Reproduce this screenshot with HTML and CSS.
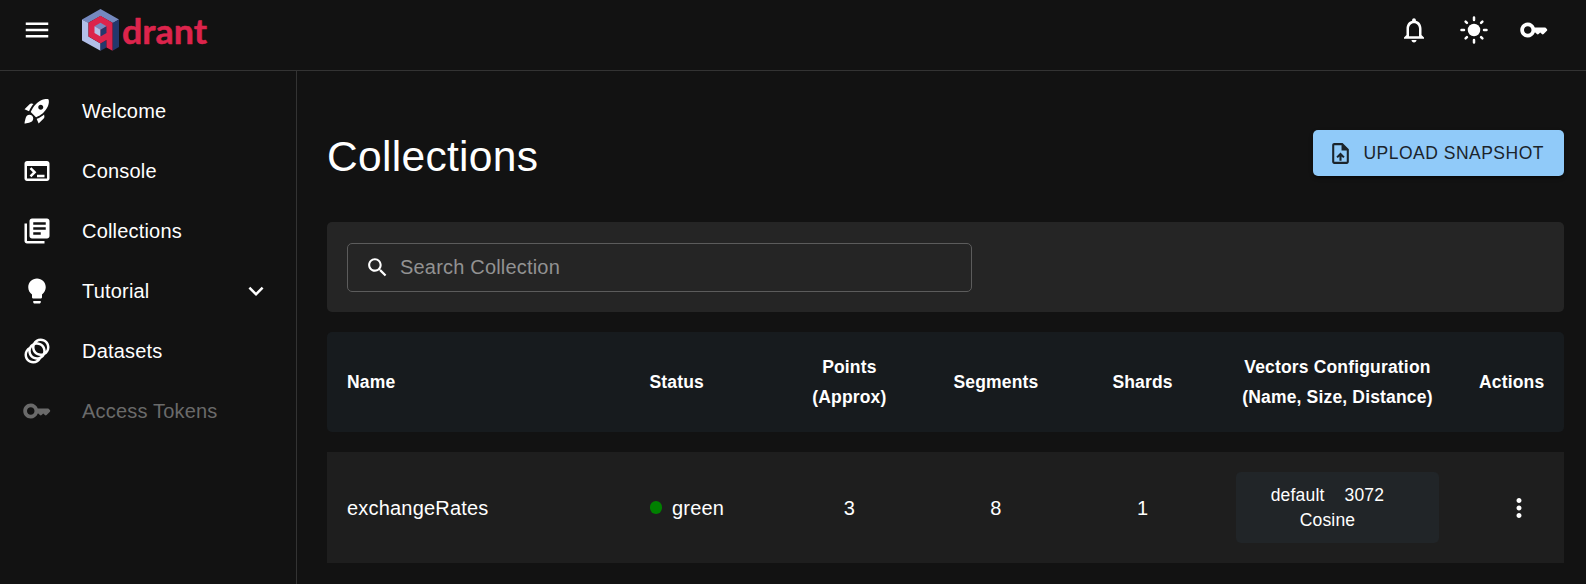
FILE: index.html
```html
<!DOCTYPE html>
<html lang="en">
<head>
<meta charset="utf-8">
<title>Qdrant Collections</title>
<link rel="stylesheet" href="styles.css">
</head>
<body>
<header class="topbar">
  <svg class="icon" viewBox="0 0 24 24"><path d="M3 18h18v-2H3zm0-5h18v-2H3zm0-7v2h18V6z"/></svg>
  <svg class="logo" viewBox="0 0 126 44">
    <path fill="#7589bf" d="M18.500 0 37 10.500 31 14 18.500 7 6 14 0 10.500z"/>
    <path fill="#b2bfe8" d="M0 10.500 6.500 14V27.500L18.500 34.500V41.700L0 31.500z"/>
    <path fill="#24386c" d="M37 10.500V38L30.500 41.700V14z"/>
    <path fill="#24386c" d="M18.500 34.500 24.500 31V38.500L18.500 41.700z"/>
    <path fill="#dc244c" d="M18.500 6.800 30.500 13.700V41.700L24.500 38.500V31L18.500 34.500 6.500 27.500V13.700z"/>
    <path fill="#7589bf" d="M18.500 13.700 24.500 17.200 18.500 20.700 12.500 17.200z"/>
    <path fill="#b2bfe8" d="M12.500 17.200 18.500 20.700V27.500L12.500 24z"/>
    <path fill="#24386c" d="M24.500 17.200V24L18.500 27.500V20.700z"/>
    <text class="logo-text" x="40" y="34.700" textLength="85" lengthAdjust="spacingAndGlyphs">drant</text>
  </svg>
  <div class="tools">
    <svg class="icon" viewBox="0 0 24 24"><path d="M12 22c1.100 0 2-.9 2-2h-4c0 1.100.9 2 2 2m6-6v-5c0-3.070-1.630-5.640-4.500-6.320V4c0-.83-.67-1.500-1.500-1.500s-1.500.67-1.500 1.500v.68C7.640 5.360 6 7.920 6 11v5l-2 2v1h16v-1zm-2 1H8v-6c0-2.480 1.510-4.500 4-4.500s4 2.020 4 4.500z"/></svg>
    <svg class="icon" viewBox="0 0 24 24"><circle cx="12" cy="12" r="5"/><path class="rays" d="M2 12h2M20 12h2M12 2v2M12 20v2M5.280 5.280l1.060 1.060M17.660 17.660l1.060 1.060M18.720 5.280l-1.060 1.060M6.340 17.660l-1.060 1.060"/></svg>
    <svg class="icon" viewBox="0 0 24 24"><path d="M20.590 10h-7.940C11.830 7.670 9.610 6 7 6c-3.310 0-6 2.690-6 6s2.690 6 6 6c2.610 0 4.830-1.670 5.650-4H13l1.290 1.290c.39.39 1.020.39 1.410 0L17 14l1.290 1.290c.39.39 1.030.39 1.420 0l2.590-2.610c.39-.39.39-1.030-.01-1.420l-.99-.97c-.2-.19-.45-.29-.71-.29M7 15c-1.650 0-3-1.350-3-3s1.350-3 3-3 3 1.350 3 3-1.350 3-3 3"/></svg>
  </div>
</header>
<div class="layout">
  <nav class="sidebar">
    <a class="nav-item"><svg class="icon" viewBox="0 0 24 24"><path d="M9.190 6.350c-2.040 2.290-3.440 5.580-3.570 5.890L2 10.690l4.050-4.050c.47-.47 1.150-.68 1.810-.55zM11.170 17s3.740-1.550 5.890-3.700c5.400-5.400 4.500-9.620 4.210-10.570-.95-.3-5.170-1.190-10.570 4.210C8.550 9.090 7 12.830 7 12.830zm6.480-2.190c-2.290 2.040-5.580 3.440-5.890 3.570L13.310 22l4.050-4.050c.47-.47.68-1.150.55-1.810zM9 18c0 .83-.34 1.580-.88 2.120C6.940 21.300 2 22 2 22s.7-4.940 1.880-6.120C4.420 15.340 5.170 15 6 15c1.660 0 3 1.340 3 3m4-9c0-1.100.9-2 2-2s2 .9 2 2-.9 2-2 2-2-.9-2-2"/></svg><span>Welcome</span></a>
    <a class="nav-item"><svg class="icon" viewBox="0 0 24 24"><path d="M20 4H4c-1.110 0-2 .9-2 2v12c0 1.100.89 2 2 2h16c1.100 0 2-.9 2-2V6c0-1.100-.89-2-2-2m0 14H4V8h16zm-2-1h-6v-2h6zM7.500 17l-1.410-1.410L8.670 13l-2.590-2.590L7.500 9l4 4z"/></svg><span>Console</span></a>
    <a class="nav-item"><svg class="icon" viewBox="0 0 24 24"><path d="M4 6H2v14c0 1.100.9 2 2 2h14v-2H4zm16-4H8c-1.100 0-2 .9-2 2v12c0 1.100.9 2 2 2h12c1.100 0 2-.9 2-2V4c0-1.100-.9-2-2-2m-1 9H9V9h10zm-4 4H9v-2h6zm4-8H9V5h10z"/></svg><span>Collections</span></a>
    <a class="nav-item"><svg class="icon" viewBox="0 0 24 24"><path d="M9 21c0 .5.4 1 1 1h4c.6 0 1-.5 1-1v-1H9zm3-19C8.100 2 5 5.100 5 9c0 2.400 1.200 4.500 3 5.700V17c0 .5.4 1 1 1h6c.6 0 1-.5 1-1v-2.300c1.800-1.300 3-3.400 3-5.700 0-3.900-3.100-7-7-7"/></svg><span>Tutorial</span><svg class="icon chevron" viewBox="0 0 24 24"><path d="M16.590 8.590 12 13.170 7.410 8.590 6 10l6 6 6-6z"/></svg></a>
    <a class="nav-item"><svg class="icon" viewBox="0 0 24 24"><path d="M15 2c-2.710 0-5.050 1.540-6.220 3.780-1.280.67-2.340 1.720-3 3C3.540 9.950 2 12.290 2 15c0 3.870 3.130 7 7 7 2.710 0 5.050-1.540 6.220-3.780 1.280-.67 2.340-1.720 3-3C20.460 14.050 22 11.710 22 9c0-3.870-3.130-7-7-7M9 20c-2.760 0-5-2.240-5-5 0-1.120.37-2.160 1-3 0 3.870 3.130 7 7 7-.84.63-1.880 1-3 1m3-3c-2.760 0-5-2.240-5-5 0-1.120.37-2.160 1-3 0 3.860 3.130 6.990 7 7-.84.63-1.880 1-3 1m4.700-3.300c-.53.19-1.100.3-1.700.3-2.760 0-5-2.240-5-5 0-.6.11-1.170.3-1.700.53-.19 1.100-.3 1.700-.3 2.760 0 5 2.240 5 5 0 .6-.11 1.170-.3 1.700M19 12c0-3.860-3.130-6.990-7-7 .84-.63 1.870-1 3-1 2.760 0 5 2.240 5 5 0 1.120-.37 2.160-1 3"/></svg><span>Datasets</span></a>
    <a class="nav-item disabled"><svg class="icon" viewBox="0 0 24 24"><path d="M20.590 10h-7.940C11.830 7.670 9.610 6 7 6c-3.310 0-6 2.690-6 6s2.690 6 6 6c2.610 0 4.830-1.670 5.650-4H13l1.290 1.290c.39.39 1.020.39 1.410 0L17 14l1.290 1.290c.39.39 1.030.39 1.420 0l2.590-2.610c.39-.39.39-1.030-.01-1.420l-.99-.97c-.2-.19-.45-.29-.71-.29M7 15c-1.650 0-3-1.350-3-3s1.350-3 3-3 3 1.350 3 3-1.350 3-3 3"/></svg><span>Access Tokens</span></a>
  </nav>
  <main class="content">
    <div class="heading">
      <h1 class="title">Collections</h1>
      <button class="upload"><svg class="icon-small" viewBox="0 0 24 24"><path d="M14 2H6c-1.100 0-1.990.9-1.990 2L4 20c0 1.100.89 2 1.990 2H18c1.100 0 2-.9 2-2V8zm4 18H6V4h7v5h5zM8 15.010l1.410 1.410L11 14.840V19h2v-4.160l1.590 1.590L16 15.010 12.010 11z"/></svg>UPLOAD SNAPSHOT</button>
    </div>
    <section class="search-card">
      <label class="search"><svg class="icon-small" viewBox="0 0 24 24"><path d="M15.500 14h-.79l-.28-.27C15.410 12.590 16 11.110 16 9.500 16 5.910 13.090 3 9.500 3S3 5.910 3 9.500 5.910 16 9.500 16c1.610 0 3.090-.59 4.230-1.570l.27.28v.79l5 4.990L20.490 19zm-6 0C7.010 14 5 11.990 5 9.500S7.010 5 9.500 5 14 7.010 14 9.500 11.990 14 9.500 14"/></svg><input class="search-input" type="text" placeholder="Search Collection"></label>
    </section>
    <div class="row head">
      <div>Name</div>
      <div>Status</div>
      <div class="center">Points<br>(Approx)</div>
      <div class="center">Segments</div>
      <div class="center">Shards</div>
      <div class="center">Vectors Configuration<br>(Name, Size, Distance)</div>
      <div class="right">Actions</div>
    </div>
    <div class="row item">
      <div>exchangeRates</div>
      <div class="status"><i class="dot"></i>green</div>
      <div class="center">3</div>
      <div class="center">8</div>
      <div class="center">1</div>
      <div class="config"><span>default</span><span>3072</span><span>Cosine</span></div>
      <div class="actions"><svg class="icon" viewBox="0 0 24 24"><path d="M12 8c1.100 0 2-.9 2-2s-.9-2-2-2-2 .9-2 2 .9 2 2 2m0 2c-1.100 0-2 .9-2 2s.9 2 2 2 2-.9 2-2-.9-2-2-2m0 6c-1.100 0-2 .9-2 2s.9 2 2 2 2-.9 2-2-.9-2-2-2"/></svg></div>
    </div>
  </main>
</div>
</body>
</html>
```
FILE: styles.css
```css
* { box-sizing: border-box; }

body {
  margin: 0;
  height: 584px;
  overflow: hidden;
  display: flex;
  flex-direction: column;
  background: #121212;
  color: #fff;
  font: 20px/30px "Liberation Sans", Arial, sans-serif;
  letter-spacing: 0.19px;
}

.icon { width: 30px; height: 30px; fill: currentColor; flex: none; display: block; }
.icon-small { width: 25px; height: 25px; fill: currentColor; flex: none; display: block; }
.rays { stroke: currentColor; stroke-width: 2; stroke-linecap: round; }

.topbar {
  height: 71px;
  flex: none;
  display: flex;
  align-items: flex-start;
  padding: 15px 37px 0 22px;
  border-bottom: 1px solid #333;
}
.logo { width: 126px; height: 44px; margin: -6px 0 0 30px; }
.logo-text {
  font-family: Lato, sans-serif;
  font-size: 34px;
  font-weight: 700;
  letter-spacing: 0;
  fill: #dc244c;
  stroke: #dc244c;
  stroke-width: 0.5px;
  stroke-linejoin: round;
}
.tools { display: flex; gap: 30px; margin-left: auto; }

.layout { display: flex; flex: 1; min-height: 0; }
.sidebar {
  width: 297px;
  flex: none;
  padding-top: 10px;
  border-right: 1px solid #333;
}
.nav-item { display: flex; align-items: center; gap: 30px; height: 60px; padding: 0 25px 0 22px; }
.chevron { margin-left: auto; }
.disabled { color: #6a6a6a; }

.content { flex: 1; padding: 59px 22px 0 30px; }
.heading { display: flex; justify-content: space-between; align-items: flex-start; height: 92px; }
.title { margin: 0; font-size: 42.5px; line-height: 54px; font-weight: 400; letter-spacing: 0.31px; }
.upload {
  display: flex;
  align-items: center;
  gap: 10px;
  height: 46px;
  padding: 0 20px 0 15px;
  border: 0;
  border-radius: 5px;
  background: #90caf9;
  color: #1b242b;
  font: 17.5px/30px "Liberation Sans", Arial, sans-serif;
  letter-spacing: 0.5px;
  box-shadow: 0 3px 2px -2px rgba(0, 0, 0, 0.4), 0 2px 4px rgba(0, 0, 0, 0.3);
}

.search-card { height: 90px; padding: 21px 20px 20px; border-radius: 5px; background: #252525; margin-bottom: 20px; }
.search {
  display: flex;
  align-items: center;
  gap: 10px;
  width: 625px;
  height: 49px;
  padding: 0 17px;
  border: 1px solid #5c5c5c;
  border-radius: 5px;
}
.search-input { flex: 1; padding: 0 0 2px; border: 0; outline: 0; background: none; color: inherit; font: inherit; letter-spacing: inherit; }
.search-input::placeholder { color: #929292; opacity: 1; }

.row { display: grid; grid-template-columns: 302.5px repeat(4, 146.6px) 1fr 105px; align-items: center; }
.row > div { padding: 0 20px; }
.row .center { text-align: center; padding: 0; }
.row .right { text-align: right; }
.head {
  height: 100px;
  margin-bottom: 20px;
  border-radius: 5px;
  background: #171b1e;
  font-size: 17.5px;
  font-weight: 700;
  letter-spacing: 0.17px;
}
.item { height: 111px; background: #1e1e1e; }
.status { display: flex; align-items: center; gap: 10px; }
.dot { width: 12.5px; height: 13px; border-radius: 50%; background: #008000; }
.row .config {
  display: flex;
  flex-wrap: wrap;
  justify-content: center;
  column-gap: 20px;
  margin: 0 20px;
  padding: 11px 30px 10px 10px;
  border-radius: 5px;
  background: #212528;
  font-size: 17.5px;
  line-height: 25px;
}
.actions { display: flex; justify-content: flex-end; }
.row .actions { padding-right: 30px; }
```
